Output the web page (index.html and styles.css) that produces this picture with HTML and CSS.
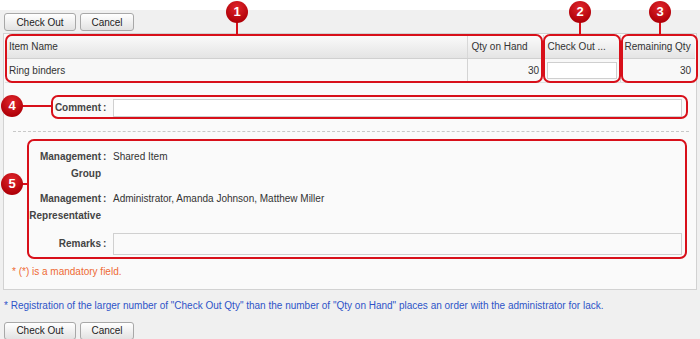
FILE: index.html
```html
<!DOCTYPE html>
<html lang="en">
<head>
  <meta charset="UTF-8">
  <title>Check Out</title>
  <link rel="stylesheet" href="styles.css">
</head>
<body>
  <div class="screen">
    <div class="page">
      <div class="toolbar">
        <button class="btn btn-wide">Check Out</button>
        <button class="btn">Cancel</button>
      </div>
      <div class="panel">
        <table class="items">
          <tr>
            <th class="col-name">Item Name</th>
            <th class="col-qty">Qty on Hand</th>
            <th class="col-out">Check Out ...</th>
            <th class="col-rest">Remaining Qty</th>
          </tr>
          <tr>
            <td>Ring binders</td>
            <td class="num">30</td>
            <td class="out-cell"><input type="text" class="qty-input"></td>
            <td class="num">30</td>
          </tr>
        </table>
        <div class="form-row comment-row">
          <label class="label">Comment</label>
          <span class="colon">:</span>
          <input type="text" class="text-input">
        </div>
        <hr class="divider">
        <div class="info">
          <div class="label">Management Group</div>
          <span class="colon">:</span>
          <div class="value">Shared Item</div>
          <div class="label">Management Representative</div>
          <span class="colon">:</span>
          <div class="value">Administrator, Amanda Johnson, Matthew Miller</div>
          <div class="label label-mid">Remarks</div>
          <span class="colon label-mid">:</span>
          <input type="text" class="text-input remarks-input">
        </div>
        <p class="mandatory">* (*) is a mandatory field.</p>
      </div>
      <p class="note">* Registration of the larger number of "Check Out Qty" than the number of "Qty on Hand" places an order with the administrator for lack.</p>
      <div class="toolbar toolbar-bottom">
        <button class="btn btn-wide">Check Out</button>
        <button class="btn">Cancel</button>
      </div>
    </div>

    <!-- callout marks -->
    <div class="mark-box box-1"></div>
    <div class="mark-box box-2"></div>
    <div class="mark-box box-3"></div>
    <div class="mark-box box-4"></div>
    <div class="mark-box box-5"></div>
    <div class="mark-line vline line-1"></div>
    <div class="mark-line vline line-2"></div>
    <div class="mark-line vline line-3"></div>
    <div class="mark-line hline line-4"></div>
    <div class="mark-line hline line-5"></div>
    <div class="badge badge-1">1</div>
    <div class="badge badge-2">2</div>
    <div class="badge badge-3">3</div>
    <div class="badge badge-4">4</div>
    <div class="badge badge-5">5</div>
  </div>
</body>
</html>
```

FILE: styles.css
```css
body {
  margin: 0;
  background: #fff;
  font-family: "Liberation Sans", Arial, sans-serif;
  font-size: 10px;
  color: #333;
}
.screen {
  position: relative;
  width: 700px;
  height: 339px;
  overflow: hidden;
}
.page {
  margin-top: 10px;
  background: #f0f0f0;
  height: 329px;
  overflow: hidden;
}
.toolbar {
  display: flex;
  gap: 4px;
  padding: 3px 4px 2px;
}
.toolbar-bottom {
  padding-top: 0;
  margin-top: 9px;
}
.btn {
  height: 18px;
  width: 54px;
  padding: 0;
  border: 1px solid #a8a8a8;
  border-radius: 3px;
  background: linear-gradient(#ffffff, #e2e2e2);
  font-family: inherit;
  font-size: 10px;
  color: #222;
}
.btn-wide {
  width: 72px;
}
.panel {
  margin: 0 3px;
  border: 1px solid #d2d2d2;
  background: #fafafa;
  padding: 1px 1px 10px;
}
.items {
  width: 690px;
  border-collapse: collapse;
  table-layout: fixed;
}
.items th,
.items td {
  box-sizing: border-box;
  padding: 0 4px;
  white-space: nowrap;
  overflow: hidden;
}
.items th {
  height: 23px;
  text-align: left;
  font-weight: normal;
  color: #333;
  background: linear-gradient(#fbfbfb, #e4e4e4);
  border-bottom: 1px solid #d0d0d0;
  border-left: 1px solid #d8d8d8;
}
.items td {
  height: 24px;
  background: #f8f8f8;
  border-left: 1px solid #d4d4d4;
  border-bottom: 1px solid #e2e2e2;
}
.items th:first-child,
.items td:first-child {
  border-left: none;
}
.col-name { width: 462px; }
.col-qty { width: 76px; }
.col-out { width: 77px; }
.col-rest { width: 75px; }
.items .num {
  text-align: right;
}
.items .out-cell {
  border-left: none;
}
.qty-input {
  display: block;
  box-sizing: border-box;
  width: 70px;
  height: 17px;
  margin: 0;
  border: 1px solid #cfcfcf;
  background: #fff;
}
.form-row,
.info {
  display: grid;
  grid-template-columns: 96px 12px 1fr;
  padding-right: 13px;
}
.comment-row {
  margin-top: 16px;
  align-items: center;
}
.label {
  padding-left: 24px;
  text-align: right;
  font-weight: bold;
  color: #444;
}
.colon {
  padding-left: 2px;
  font-weight: bold;
  color: #444;
}
.text-input {
  box-sizing: border-box;
  height: 18px;
  margin: 0;
  border: 1px solid #d0d0d0;
  background: #fff;
}
.divider {
  margin: 14px 6px 0 8px;
  border: none;
  border-top: 1px dashed #c8c8c8;
}
.info {
  margin-top: 16px;
  row-gap: 8px;
  line-height: 17px;
}
.info .value {
  color: #333;
}
.label-mid {
  align-self: center;
}
.remarks-input {
  height: 22px;
  margin-top: 1px;
  background: #fafafa;
}
.mandatory {
  margin: 10px 0 0 7px;
  line-height: 14px;
  color: #ee6a34;
}
.note {
  margin: 9px 0 0 4px;
  line-height: 14px;
  color: #2e54c8;
}
.mark-box {
  position: absolute;
  box-sizing: border-box;
  border: 2px solid #d8101a;
  border-radius: 7px;
}
.box-1 { left: 5px; top: 34px; width: 538px; height: 49px; }
.box-2 { left: 543px; top: 34px; width: 78px; height: 49px; }
.box-3 { left: 621px; top: 34px; width: 77px; height: 49px; }
.box-4 { left: 51px; top: 95px; width: 637px; height: 24px; }
.box-5 { left: 27px; top: 139px; width: 660px; height: 120px; }
.mark-line {
  position: absolute;
  background: #d8101a;
}
.vline { width: 2px; top: 20px; height: 15px; }
.hline { height: 2px; left: 20px; }
.line-1 { left: 236px; }
.line-2 { left: 579px; }
.line-3 { left: 659px; }
.line-4 { top: 105px; width: 32px; }
.line-5 { top: 183px; width: 8px; }
.badge {
  position: absolute;
  width: 22px;
  height: 22px;
  margin: -11px 0 0 -11px;
  border-radius: 50%;
  background: radial-gradient(circle at 50% 30%, #e0262c, #b00008 75%);
  color: #fff;
  font-weight: bold;
  font-size: 13px;
  line-height: 22px;
  text-align: center;
}
.badge-1 { left: 237px; top: 12px; }
.badge-2 { left: 580px; top: 12px; }
.badge-3 { left: 660px; top: 12px; }
.badge-4 { left: 12px; top: 106px; }
.badge-5 { left: 12px; top: 184px; }
```
